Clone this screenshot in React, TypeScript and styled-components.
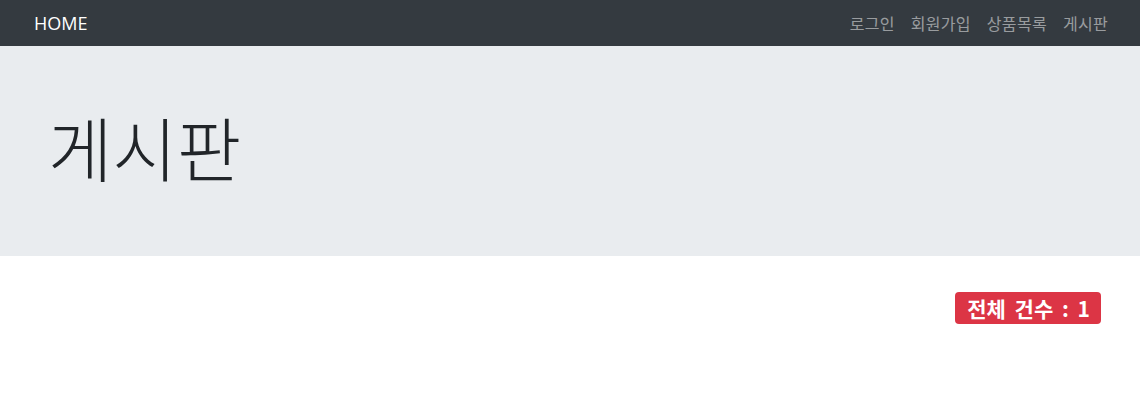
import React from "react";
import styled, { createGlobalStyle } from "styled-components";

const Global = createGlobalStyle`
  html, body { margin: 0; padding: 0; background: #fff; }
  body { font-family: "Open Sans", "Noto Sans CJK KR", sans-serif; color: #212529; }
  * { box-sizing: border-box; }
`;

const Navbar = styled.nav`
  height: 46px;
  background: #343a40;
  display: flex;
  align-items: center;
  justify-content: space-between;
  padding: 0 24px 0 34px;
`;

const Brand = styled.a`
  color: #fff;
  font-family: "Open Sans", sans-serif;
  font-size: 18px;
  text-decoration: none;
  line-height: 1;
`;

const NavList = styled.ul`
  display: flex;
  list-style: none;
  margin: 0;
  padding: 0;
`;

const NavLink = styled.a`
  display: block;
  padding: 0 8px;
  color: rgba(255, 255, 255, 0.5);
  font-family: "Noto Sans CJK KR", sans-serif;
  font-size: 16px;
  letter-spacing: 0.3px;
  text-decoration: none;
  line-height: 1;
`;

const Jumbotron = styled.section`
  background: #e9ecef;
  height: 210px;
  display: flex;
  align-items: center;
  padding: 0 0 8px 48px;
`;

const Title = styled.h1`
  margin: 0;
  font-family: "Noto Sans CJK KR", sans-serif;
  font-weight: 300;
  font-size: 70px;
  line-height: 1;
  color: #212529;
`;

const Content = styled.main`
  display: flex;
  justify-content: flex-end;
  padding: 36px 39px 0 0;
`;

const Badge = styled.span`
  display: inline-flex;
  align-items: center;
  height: 32px;
  padding: 0 11px 0 12px;
  background: #dc3545;
  color: #fff;
  border-radius: 4px;
  font-family: "Noto Sans CJK KR", sans-serif;
  font-weight: 700;
  font-size: 21px;
  word-spacing: 4px;
  line-height: 1;
`;

export default function App() {
  return (
    <>
      <Global />
      <Navbar>
        <Brand href="#">HOME</Brand>
        <NavList>
          <li><NavLink href="#">로그인</NavLink></li>
          <li><NavLink href="#">회원가입</NavLink></li>
          <li><NavLink href="#">상품목록</NavLink></li>
          <li><NavLink href="#">게시판</NavLink></li>
        </NavList>
      </Navbar>
      <Jumbotron>
        <Title>게시판</Title>
      </Jumbotron>
      <Content>
        <Badge>전체 건수 : 1</Badge>
      </Content>
    </>
  );
}
